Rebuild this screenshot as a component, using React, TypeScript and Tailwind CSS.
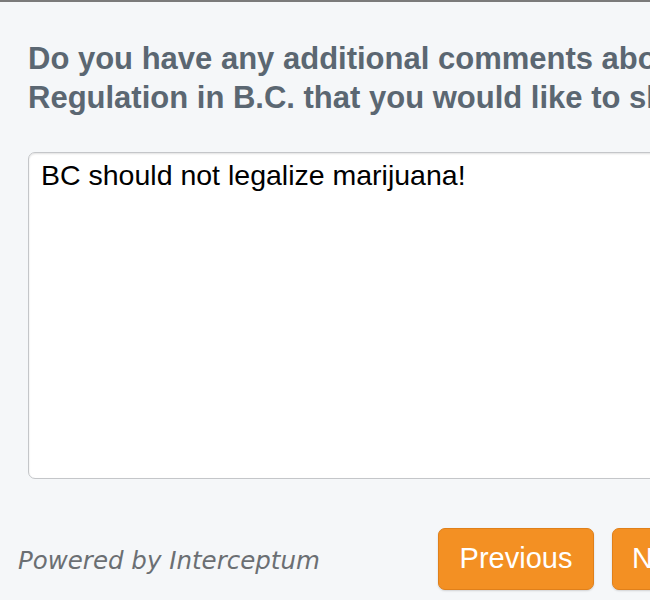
import React from "react";

export default function App() {
  return (
    <div className="w-[650px] h-[600px] overflow-hidden bg-[#f5f7f9] border-t-2 border-[#7b7b7b] font-['Liberation_Sans',Arial,sans-serif]">
      <div className="pl-[28px] pt-[37px] w-[800px]">
        <h2 className="text-[31px] leading-[39px] font-bold text-[#5b6772] whitespace-nowrap">
          Do you have any additional comments about Cannabis
          <br />
          Regulation in B.C. that you would like to share?
        </h2>
      </div>

      <div className="pl-[28px] pt-[35px] w-[800px]">
        <textarea
          readOnly
          defaultValue="BC should not legalize marijuana!"
          className="block w-[660px] h-[327px] resize-none rounded-[7px] border border-[#c4c6c9] bg-white px-[12px] pt-[6px] text-[28.5px] leading-[32px] text-black shadow-[inset_0_1px_2px_rgba(0,0,0,0.12)] outline-none font-['Liberation_Sans',Arial,sans-serif]"
        />
      </div>

      <div className="flex items-center pt-[49px] w-[800px]">
        <div className="w-[438px] shrink-0 pl-[18px] pt-[4px]">
          <span className="italic text-[24.5px] text-[#6b6f73] font-['DejaVu_Sans',Verdana,sans-serif]">
            Powered by Interceptum
          </span>
        </div>
        <div className="flex gap-[18px] shrink-0">
          <button className="w-[156px] h-[62px] rounded-[7px] bg-[#f39023] border border-[#e0801a] text-white text-[29px] shadow-[0_1px_2px_rgba(0,0,0,0.15)]">
            Previous
          </button>
          <button className="w-[120px] h-[62px] rounded-[7px] bg-[#f39023] border border-[#e0801a] text-white text-[29px] text-left pl-[19px] shadow-[0_1px_2px_rgba(0,0,0,0.15)]">
            Next
          </button>
        </div>
      </div>
    </div>
  );
}
